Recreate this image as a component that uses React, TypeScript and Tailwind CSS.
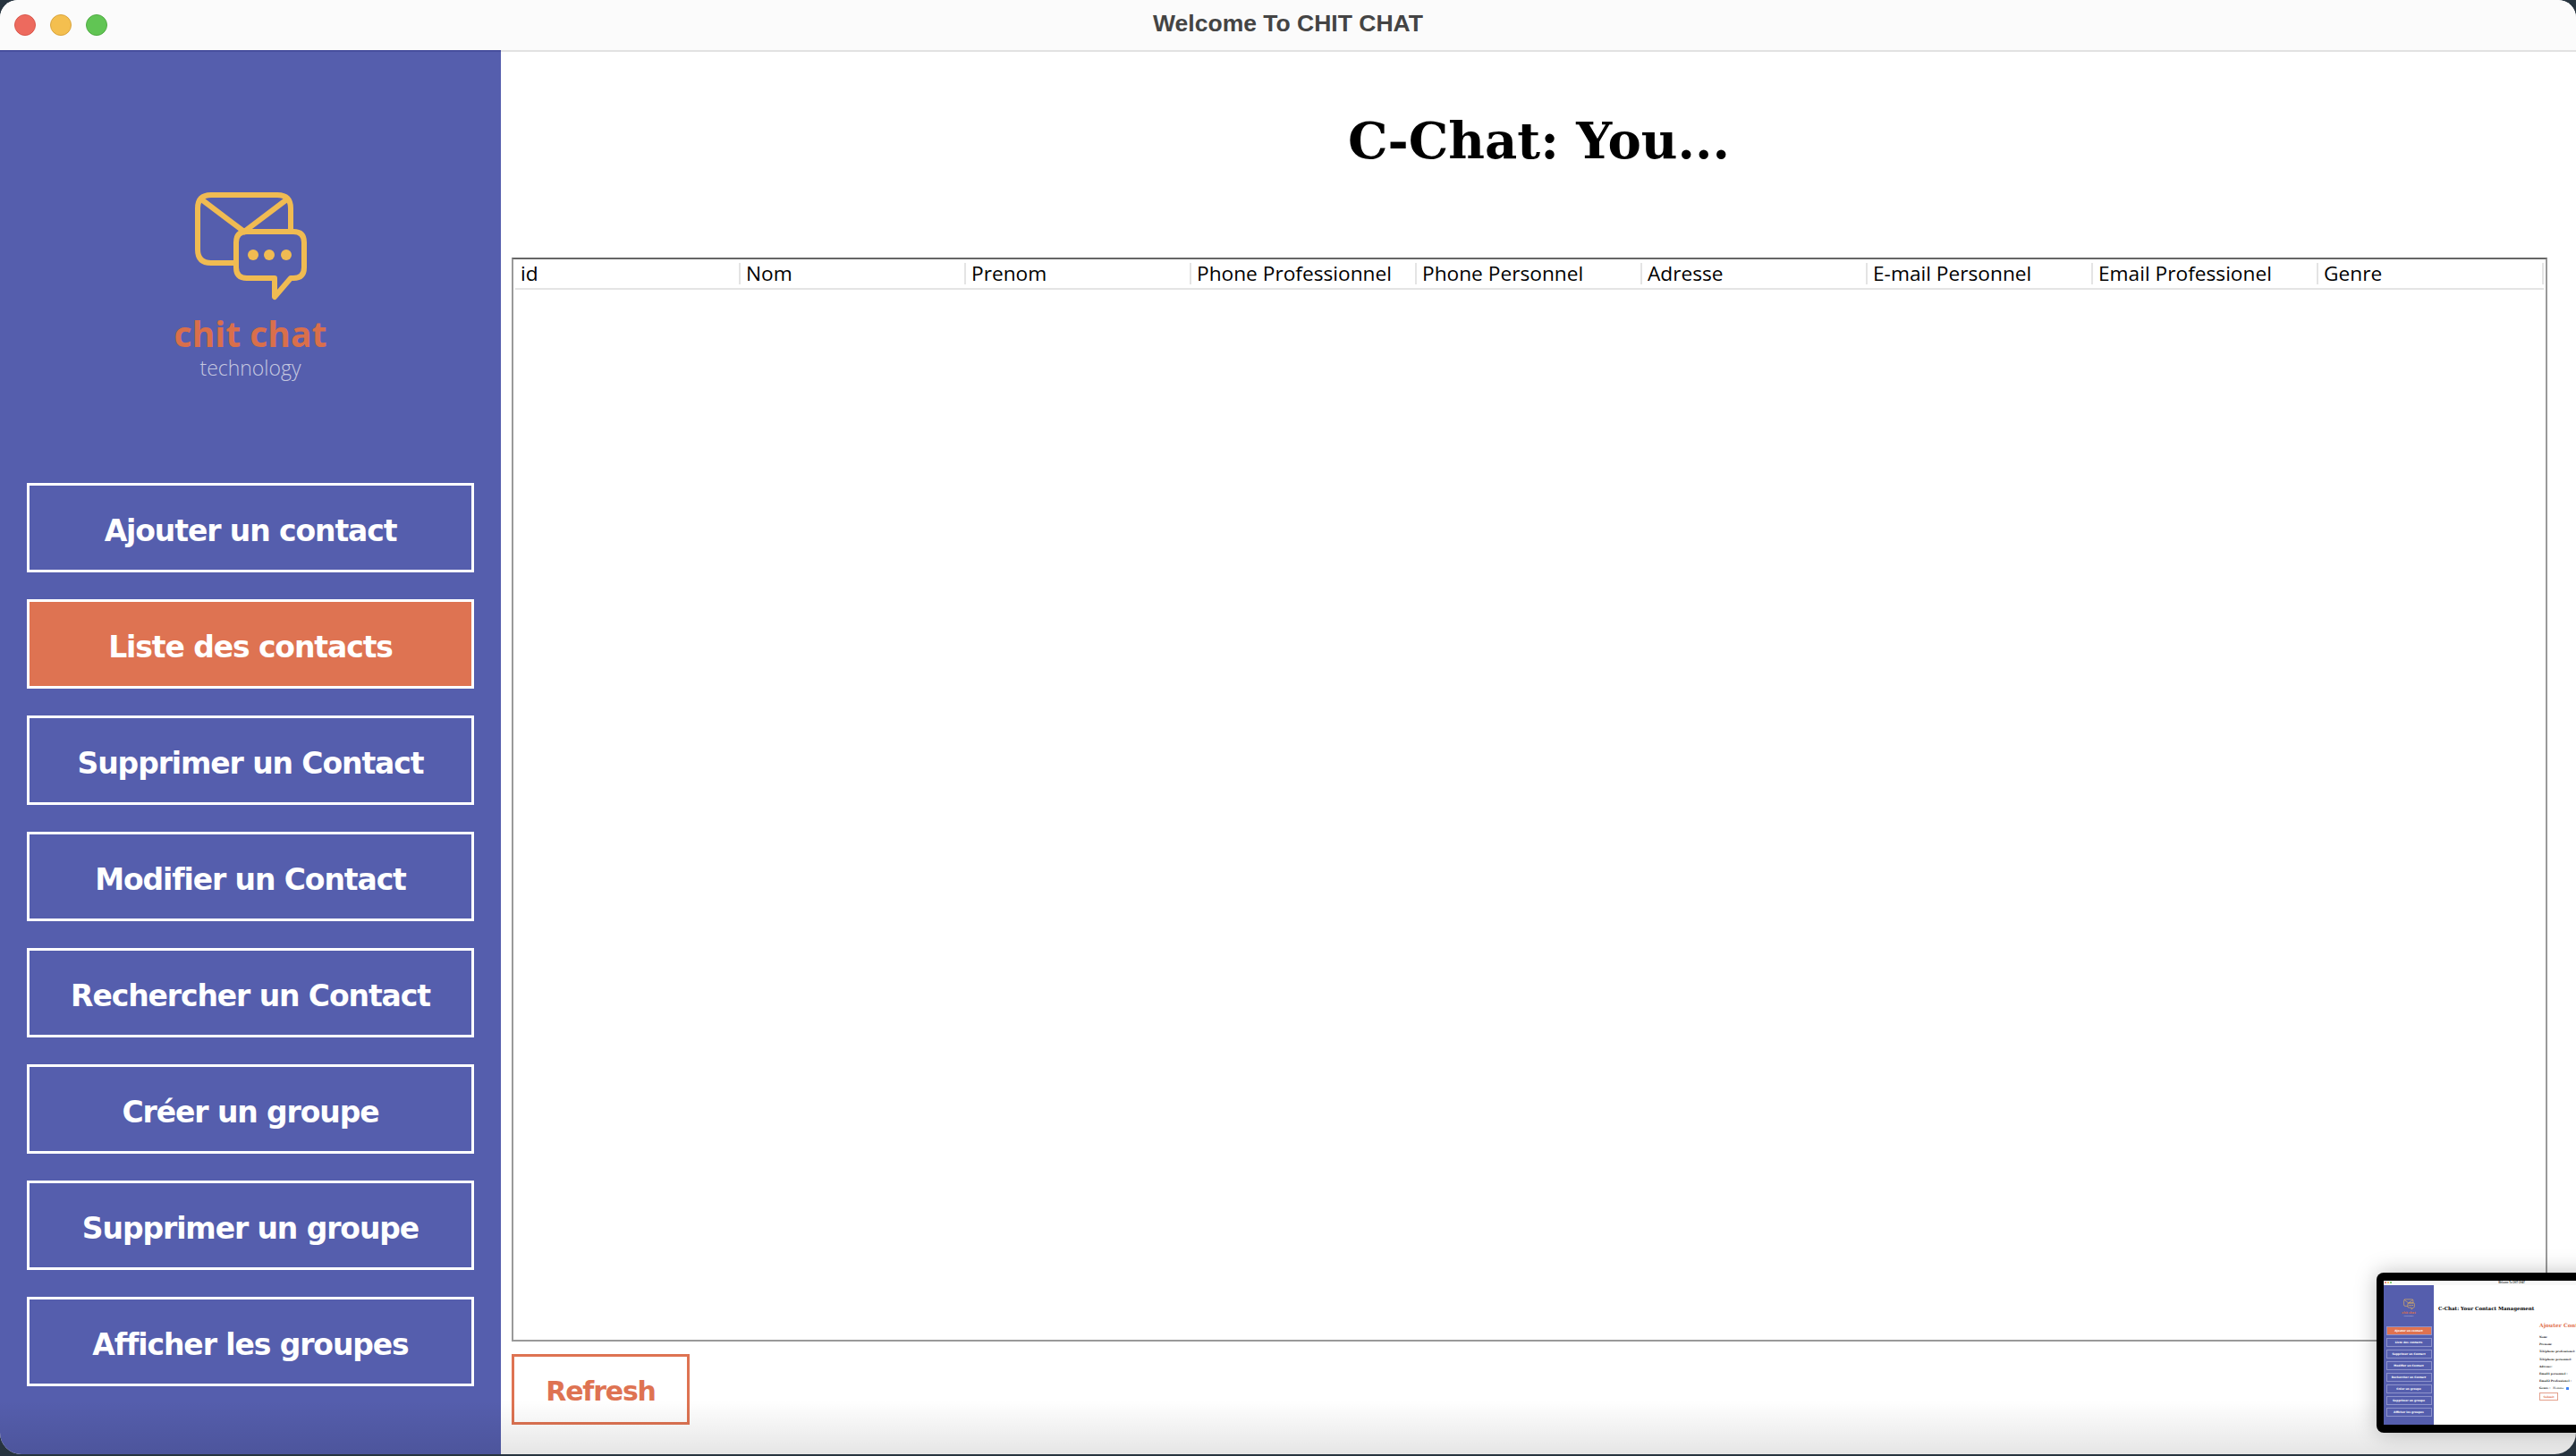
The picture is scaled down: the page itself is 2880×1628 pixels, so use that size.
import React from "react";

const menu = [
  "Ajouter un contact",
  "Liste des contacts",
  "Supprimer un Contact",
  "Modifier un Contact",
  "Rechercher un Contact",
  "Créer un groupe",
  "Supprimer un groupe",
  "Afficher les groupes",
];

const columns = [
  "id",
  "Nom",
  "Prenom",
  "Phone Professionnel",
  "Phone Personnel",
  "Adresse",
  "E-mail Personnel",
  "Email Professionel",
  "Genre",
];

const formLabels = [
  "Nom:",
  "Prenom:",
  "Téléphone professionel:",
  "Téléphone personnel:",
  "Adresse:",
  "Email1 personnel :",
  "Email2 Professionel :",
];

const Logo = ({ className }: { className: string }) => (
  <svg className={className} viewBox="215 212 131 126" fill="none" stroke="#f0bb52" strokeWidth="6">
    <path d="M264 294H236Q221 294 221 279V233Q221 218 236 218H310Q325 218 325 233V259" />
    <path d="M224 222L273 259L322 222M273 259H325" />
    <path
      d="M276 259H328Q340 259 340 271V299Q340 311 328 311H325L307 332V311H276Q264 311 264 299V271Q264 259 276 259Z"
      strokeLinejoin="round"
    />
    <circle cx="283" cy="285" r="6" fill="#f0bb52" stroke="none" />
    <circle cx="301" cy="285" r="6" fill="#f0bb52" stroke="none" />
    <circle cx="320" cy="285" r="6" fill="#f0bb52" stroke="none" />
  </svg>
);

const Thumbnail = () => (
  <div className="absolute left-[2657px] top-[1423px] w-[300px] h-[179px] rounded-[8px] bg-black pl-[8px] pt-[9px] pb-[9px] shadow-[0_0_24px_rgba(0,0,0,0.25)]">
    <div className="h-full w-full flex flex-col bg-white">
      <div className="h-[5px] flex items-center justify-center relative bg-[#f8f8f8]">
        <div className="absolute left-[1px] top-[1px] flex gap-[1px]">
          <span className="w-[2px] h-[2px] rounded-full bg-[#ed6a5e]" />
          <span className="w-[2px] h-[2px] rounded-full bg-[#f4bf4f]" />
          <span className="w-[2px] h-[2px] rounded-full bg-[#61c554]" />
        </div>
        <span className="text-[2.6px] text-[#444] font-bold font-['Liberation_Sans',sans-serif] -ml-[6px]">
          Welcome To CHIT CHAT
        </span>
      </div>
      <div className="flex-1 flex">
        <div className="w-[56px] shrink-0 flex flex-col items-center bg-[#555ead] pt-[15px]">
          <Logo className="w-[13px] h-[13px]" />
          <span className="text-[3.5px] leading-[4px] mt-[1px] font-bold text-[#d96f4b] font-['Open_Sans',sans-serif]">
            chit chat
          </span>
          <span className="text-[2.2px] leading-[3px] text-[#c5c8e0] font-['Open_Sans',sans-serif]">technology</span>
          <div className="w-[51px] flex flex-col gap-[3px] mt-[10px]">
            {menu.map((item, i) => (
              <div
                key={item}
                className={`h-[10px] flex items-center justify-center border-[0.5px] border-[#8d93cb] text-white font-bold text-[3px] font-['DejaVu_Sans',sans-serif] ${
                  i === 0 ? "bg-[#df7250]" : ""
                }`}
              >
                {item}
              </div>
            ))}
          </div>
        </div>
        <div className="flex-1 relative">
          <div className="pl-[5px] pt-[22px] text-[5.5px] leading-[8px] font-bold text-black whitespace-nowrap font-['DejaVu_Serif',serif]">
            C-Chat: Your Contact Management
          </div>
          <div className="pl-[118px] pt-[11px] font-['DejaVu_Serif',serif]">
            <div className="text-[6px] leading-[8px] font-bold text-[#df7250] whitespace-nowrap">Ajouter Contact</div>
            <div className="flex flex-col gap-[4.2px] mt-[7px]">
              {formLabels.map((label) => (
                <div key={label} className="text-[3px] leading-[4px] font-bold text-[#222] whitespace-nowrap">
                  {label}
                </div>
              ))}
              <div className="flex items-center gap-[3px] text-[3px] leading-[4px] font-bold text-[#222]">
                <span>Genre :</span>
                <span className="font-normal">Homme</span>
                <span className="w-[3px] h-[3px] rounded-[0.5px] bg-[#3b82f6]" />
              </div>
            </div>
            <div className="w-[21px] h-[9px] mt-[3px] flex items-center justify-center border-[0.5px] border-[#e3a08c] text-[3px] font-bold text-[#df7250]">
              Submit
            </div>
          </div>
        </div>
      </div>
    </div>
  </div>
);

const App = () => {
  return (
    <div className="relative w-[2880px] h-[1628px] overflow-hidden bg-[#27343f]">
      <div className="relative w-full h-[1626px] flex flex-col overflow-hidden rounded-t-[20px] rounded-b-[24px] bg-white">
        <div className="relative h-[56px] shrink-0 flex items-center justify-center bg-[#fbfbfb]">
          <div className="absolute left-[16px] top-[16px] flex gap-[16px]">
            <span className="w-[24px] h-[24px] rounded-full bg-[#ed6a5e] border border-[#d9584d]" />
            <span className="w-[24px] h-[24px] rounded-full bg-[#f4bf4f] border border-[#d9a53f]" />
            <span className="w-[24px] h-[24px] rounded-full bg-[#61c554] border border-[#52ab46]" />
          </div>
          <span className="-mt-[2px] text-[26.5px] font-bold text-[#444444] font-['Liberation_Sans',sans-serif]">
            Welcome To CHIT CHAT
          </span>
        </div>

        <div className="flex-1 flex min-h-0">
          <aside className="w-[560px] shrink-0 flex flex-col items-center bg-[#555ead] border-t-2 border-[#474f9e]">
            <Logo className="w-[131px] h-[126px] mt-[154px]" />
            <div className="text-[39px] leading-[50px] mt-[10px] font-bold text-[#d96f4b] font-['Open_Sans',sans-serif]">
              chit chat
            </div>
            <div className="text-[23px] leading-[30px] mt-[-2px] font-light text-[#c5c8e0] font-['Open_Sans',sans-serif]">
              technology
            </div>
            <div className="flex flex-col gap-[30px] mt-[114px]">
              {menu.map((item, i) => (
                <button
                  key={item}
                  className={`w-[500px] h-[100px] flex items-center justify-center pt-[7px] border-[3px] border-white text-white text-[33px] tracking-[-1.1px] font-bold font-['DejaVu_Sans',sans-serif] ${
                    i === 1 ? "bg-[#de7352]" : ""
                  }`}
                >
                  {item}
                </button>
              ))}
            </div>
          </aside>

          <main className="flex-1 flex flex-col border-t-2 border-[#e2e2e2]">
            <h1 className="h-[230px] shrink-0 pt-[61px] text-center text-[56px] leading-[76px] font-bold text-black font-['DejaVu_Serif',serif]">
              C-Chat: You...
            </h1>
            <div className="ml-[12px] mr-[33px] h-[1212px] shrink-0 border-2 border-[#999999] border-t-[#666666] px-[2px]">
              <div className="flex h-[34px] pt-[4px] border-b-2 border-[#e4e4e4]">
                {columns.map((col) => (
                  <div
                    key={col}
                    className="w-[252px] h-[24px] shrink-0 pl-[6px] border-r-2 border-[#e4e4e4] text-[22.7px] leading-[24px] text-black whitespace-nowrap font-['Open_Sans',sans-serif]"
                  >
                    {col}
                  </div>
                ))}
              </div>
            </div>
            <div className="ml-[12px] mt-[14px]">
              <button className="w-[199px] h-[79px] flex items-center justify-center pt-[4px] border-[3px] border-[#de7352] text-[#de7352] text-[30px] tracking-[-1.2px] font-bold font-['DejaVu_Sans',sans-serif]">
                Refresh
              </button>
            </div>
          </main>
        </div>

        <div className="absolute left-0 right-0 bottom-0 h-[60px] pointer-events-none bg-linear-to-b from-transparent to-black/10" />
      </div>
      <Thumbnail />
    </div>
  );
};

export default App;
